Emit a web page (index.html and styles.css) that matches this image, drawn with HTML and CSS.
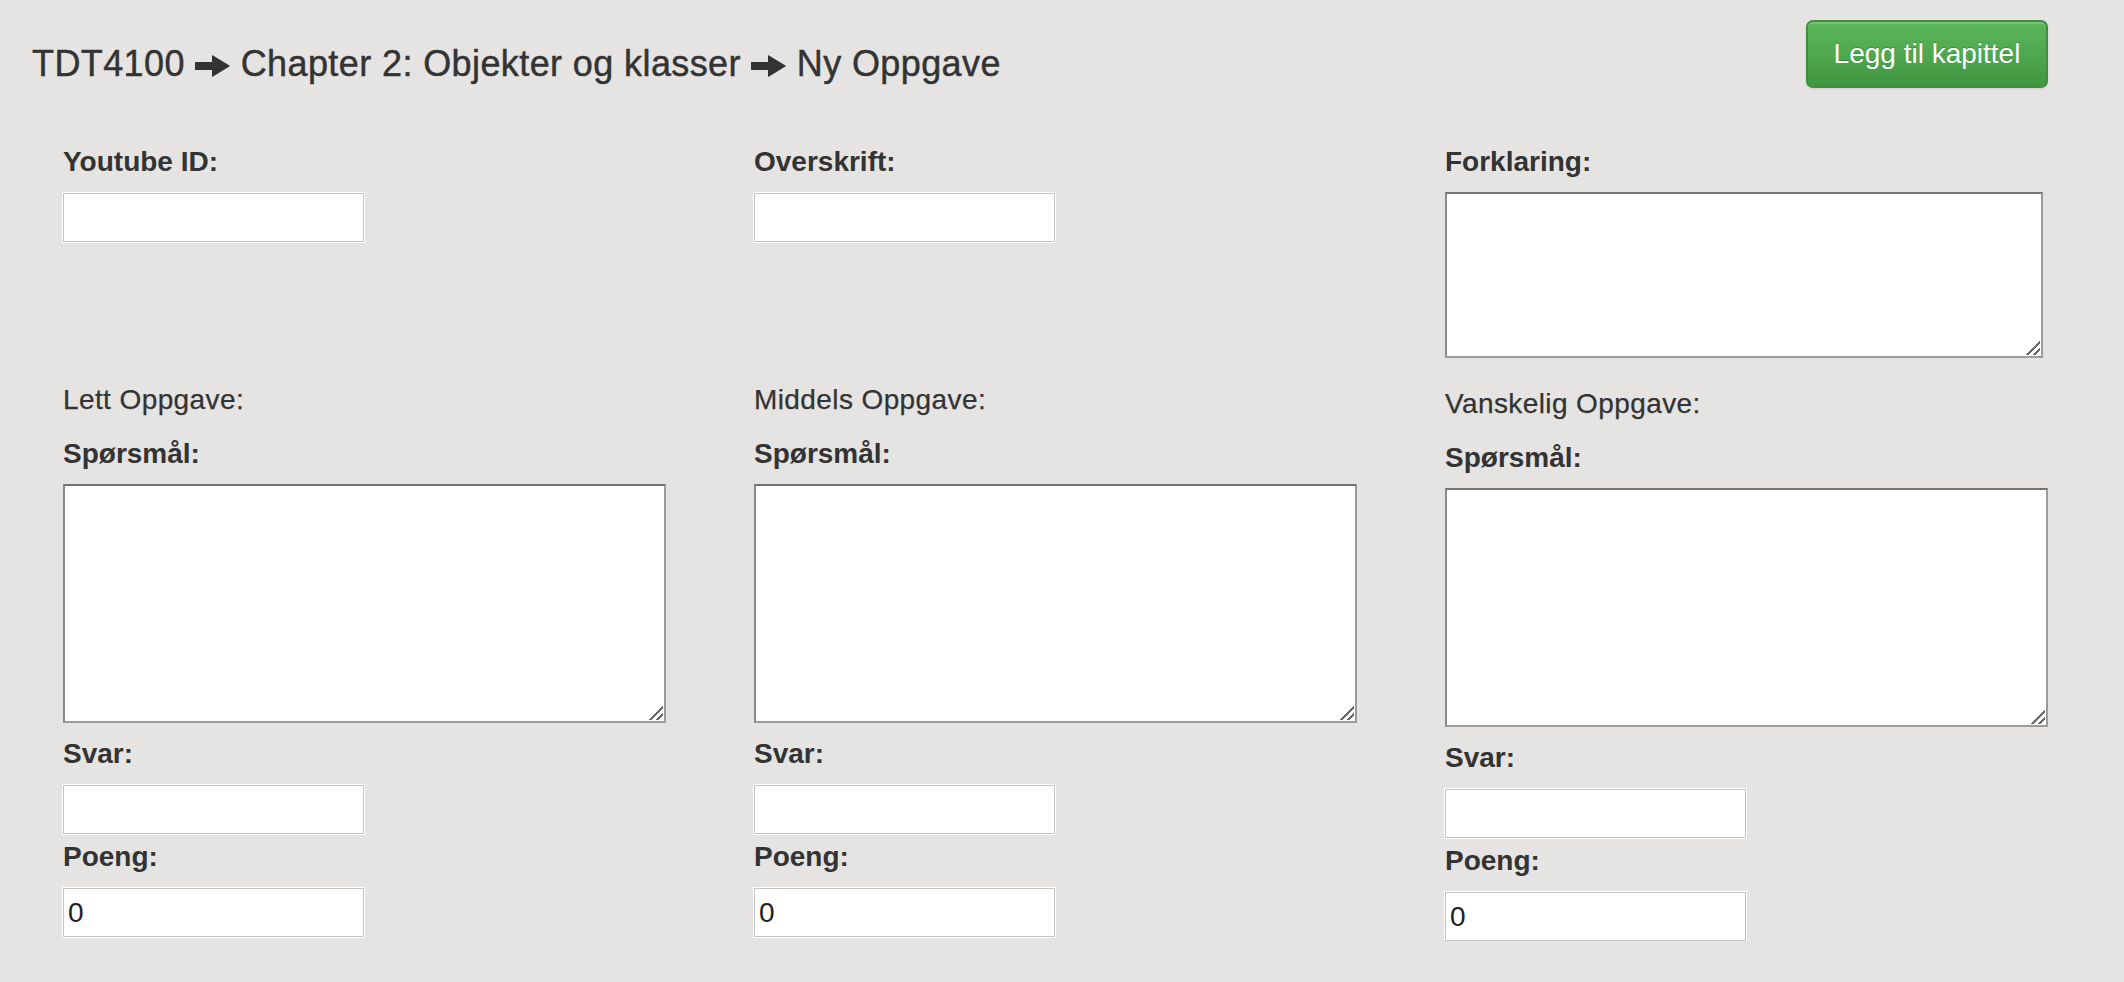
FILE: index.html
```html
<!DOCTYPE html>
<html lang="no">
<head>
<meta charset="utf-8">
<title>Ny Oppgave</title>
<link rel="stylesheet" href="styles.css">
</head>
<body>
<header class="topbar">
  <h1 class="crumbs">TDT4100 <svg class="arrow" viewBox="0 0 35 22" width="35" height="22"><path d="M0 7 H17 V0.5 Q17 0 17.6 0.3 L34.4 10.4 Q35 11 34.4 11.6 L17.6 21.7 Q17 22 17 21.5 V15 H0 Z"/></svg> Chapter 2: Objekter og klasser <svg class="arrow" viewBox="0 0 35 22" width="35" height="22"><path d="M0 7 H17 V0.5 Q17 0 17.6 0.3 L34.4 10.4 Q35 11 34.4 11.6 L17.6 21.7 Q17 22 17 21.5 V15 H0 Z"/></svg> Ny Oppgave</h1>
  <button class="btn-success" type="button">Legg til kapittel</button>
</header>

<main class="form-grid">
  <div class="cell">
    <label class="lbl">Youtube ID:</label>
    <input class="field" type="text">
  </div>
  <div class="cell">
    <label class="lbl">Overskrift:</label>
    <input class="field" type="text">
  </div>
  <div class="cell">
    <label class="lbl">Forklaring:</label>
    <textarea class="area area-short"></textarea>
  </div>

  <div class="cell">
    <div class="sub">Lett Oppgave:</div>
    <label class="lbl lbl-q">Spørsmål:</label>
    <textarea class="area area-tall"></textarea>
    <label class="lbl lbl-after">Svar:</label>
    <input class="field field-gap" type="text">
    <label class="lbl">Poeng:</label>
    <input class="field" type="text" value="0">
  </div>
  <div class="cell">
    <div class="sub">Middels Oppgave:</div>
    <label class="lbl lbl-q">Spørsmål:</label>
    <textarea class="area area-tall"></textarea>
    <label class="lbl lbl-after">Svar:</label>
    <input class="field field-gap" type="text">
    <label class="lbl">Poeng:</label>
    <input class="field" type="text" value="0">
  </div>
  <div class="cell cell-shift">
    <div class="sub">Vanskelig Oppgave:</div>
    <label class="lbl lbl-q">Spørsmål:</label>
    <textarea class="area area-tall"></textarea>
    <label class="lbl lbl-after">Svar:</label>
    <input class="field field-gap" type="text">
    <label class="lbl">Poeng:</label>
    <input class="field" type="text" value="0">
  </div>
</main>
</body>
</html>
```

FILE: styles.css
```css
html, body {
  margin: 0;
  padding: 0;
}

body {
  background: #e5e4e2;
  color: #333;
  font-family: "Liberation Sans", Arial, Helvetica, sans-serif;
  font-size: 28px;
  line-height: 40px;
}

.topbar {
  display: flex;
  justify-content: space-between;
  align-items: flex-start;
  padding: 20px 76px 0 32px;
}

.crumbs {
  margin: 24px 0 0;
  font-size: 36px;
  line-height: 40px;
  font-weight: normal;
  letter-spacing: 0.4px;
  color: #333;
  -webkit-text-stroke: 0.45px #333;
  white-space: nowrap;
}

.arrow {
  fill: #333;
  vertical-align: -1px;
}

.btn-success {
  width: 242px;
  height: 68px;
  padding: 0 24px;
  border: 2px solid #3e8f3e;
  border-radius: 7px;
  background-color: #4cae4c;
  background-image: linear-gradient(to bottom, #5cb85c 0%, #419641 100%);
  box-shadow: inset 0 2px 0 rgba(255, 255, 255, 0.15), 0 1px 2px rgba(0, 0, 0, 0.1);
  color: #fff;
  font-family: "Liberation Sans", Arial, Helvetica, sans-serif;
  font-size: 28px;
  line-height: 40px;
  text-shadow: 0 -1px 0 rgba(0, 0, 0, 0.2);
  cursor: pointer;
}

.form-grid {
  display: grid;
  grid-template-columns: 691px 691px 691px;
  row-gap: 22px;
  margin-top: 54px;
  padding-left: 63px;
  align-items: start;
}

.cell {
  display: flex;
  flex-direction: column;
  align-items: flex-start;
}

.cell-shift {
  margin-top: 4px;
}

.lbl {
  display: block;
  font-weight: bold;
  line-height: 40px;
  margin-bottom: 10px;
}

.lbl-q {
  margin-top: 14px;
  margin-bottom: 10px;
}

.lbl-after {
  margin-top: 11px;
}

.sub {
  line-height: 40px;
  letter-spacing: 0.4px;
  -webkit-text-stroke: 0.25px #333;
}

.field {
  display: block;
  box-sizing: border-box;
  width: 301px;
  height: 49px;
  margin: 1px 0 0;
  padding: 0 4px;
  border: 1px solid #c4c4c4;
  outline: 1px solid #fff;
  background: #fff;
  color: #222;
  font-family: "Liberation Sans", Arial, Helvetica, sans-serif;
  font-size: 28px;
}

.field-gap {
  margin-bottom: 3px;
}

.area {
  display: block;
  box-sizing: border-box;
  margin: 0;
  border-style: solid;
  border-width: 2px;
  border-color: #747474 #9c9c9c #9c9c9c #8a8a8a;
  background-color: #fff;
  background-image: linear-gradient(135deg,
    transparent 0 52%, #6a6a6a 52% 62%,
    transparent 62% 76%, #6a6a6a 76% 86%,
    transparent 86%);
  background-size: 15px 15px;
  background-position: right 1px bottom 1px;
  background-repeat: no-repeat;
  font-family: "Liberation Sans", Arial, Helvetica, sans-serif;
  font-size: 28px;
  resize: none;
}

.area-short {
  width: 598px;
  height: 166px;
}

.area-tall {
  width: 603px;
  height: 239px;
}
```
